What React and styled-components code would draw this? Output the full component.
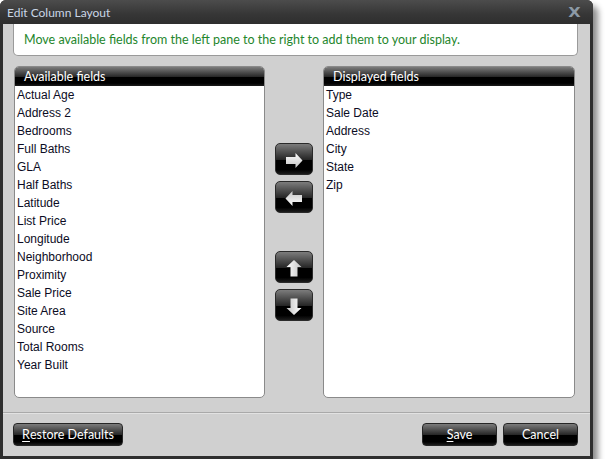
import React from "react";
import styled, { createGlobalStyle } from "styled-components";

const availableFields = [
  "Actual Age",
  "Address 2",
  "Bedrooms",
  "Full Baths",
  "GLA",
  "Half Baths",
  "Latitude",
  "List Price",
  "Longitude",
  "Neighborhood",
  "Proximity",
  "Sale Price",
  "Site Area",
  "Source",
  "Total Rooms",
  "Year Built",
];

const displayedFields = ["Type", "Sale Date", "Address", "City", "State", "Zip"];

const GlobalStyle = createGlobalStyle`
  html, body {
    margin: 0;
    background: #ffffff;
  }
`;

//arrow drawing, rotated for each direction
const Arrow = ({ angle }) => (
  <svg width="38" height="32" viewBox="0 0 38 32">
    <defs>
      <linearGradient id={`ag${angle}`} x1="0" y1="0" x2="0" y2="1">
        <stop offset="0" stopColor="#ffffff" />
        <stop offset="1" stopColor="#c4c4c4" />
      </linearGradient>
    </defs>
    <g transform={`translate(19 17.5) rotate(${angle})`}>
      <polygon
        points="-8,-3.5 1.5,-3.5 1.5,-7.5 8.5,0 1.5,7.5 1.5,3.5 -8,3.5"
        fill={`url(#ag${angle})`}
      />
    </g>
  </svg>
);

const App = () => {
  return (
    <>
      <GlobalStyle />
      <StyledDialog>
        <StyledTitleBar>
          <span>Edit Column Layout</span>
          <StyledClose>X</StyledClose>
        </StyledTitleBar>
        <StyledBody>
          <StyledInfo>
            Move available fields from the left pane to the right to add them
            to your display.
          </StyledInfo>
          <StyledPanes>
            <FieldList title="Available fields" items={availableFields} width={251} />
            <StyledMover>
              <StyledArrowButton>
                <Arrow angle={0} />
              </StyledArrowButton>
              <StyledArrowButton>
                <Arrow angle={180} />
              </StyledArrowButton>
              <StyledArrowButton $gap>
                <Arrow angle={-90} />
              </StyledArrowButton>
              <StyledArrowButton>
                <Arrow angle={90} />
              </StyledArrowButton>
            </StyledMover>
            <FieldList title="Displayed fields" items={displayedFields} width={252} />
          </StyledPanes>
          <StyledFooter>
            <StyledButton $width={110}>
              <u>R</u>estore Defaults
            </StyledButton>
            <StyledRight>
              <StyledButton $width={75}>
                <u>S</u>ave
              </StyledButton>
              <StyledButton $width={75}>Cancel</StyledButton>
            </StyledRight>
          </StyledFooter>
        </StyledBody>
      </StyledDialog>
    </>
  );
};

//List Component
const FieldList = ({ title, items, width }) => {
  return (
    <StyledList $width={width}>
      <StyledListHeader>{title}</StyledListHeader>
      {items.map((item) => (
        <StyledItem key={item}>{item}</StyledItem>
      ))}
    </StyledList>
  );
};

//styling
const gloss = `
  background: linear-gradient(
    to bottom,
    #7c7c7c 0%,
    #4a4a4a 30%,
    #262626 52%,
    #000000 53%,
    #000000 85%,
    #1c1c1c 100%
  );
`;

const StyledDialog = styled.div`
  width: 593px;
  height: 459px;
  box-sizing: border-box;
  padding: 0 3px 3px 3px;
  background: #2e2e2e;
  border-radius: 6px 6px 0 0;
  box-shadow: 5px 6px 6px rgba(0, 0, 0, 0.45);
  display: flex;
  flex-direction: column;
  font-family: Lato, "Open Sans", sans-serif;
`;

const StyledTitleBar = styled.div`
  height: 24px;
  flex: none;
  display: flex;
  align-items: center;
  justify-content: space-between;
  padding: 0 13px 0 7px;
  background: linear-gradient(to bottom, #4c4c4c, #363636 60%, #2e2e2e);
  border-radius: 6px 6px 0 0;
  margin: 0 -3px;
  color: #c9d6e6;
  font-size: 12px;
`;

const StyledClose = styled.span`
  color: #8c9aa6;
  font-family: "DejaVu Sans", sans-serif;
  font-weight: bold;
  font-size: 14px;
  transform: scaleX(1.15);
`;

const StyledBody = styled.div`
  flex: 1;
  background: #d0d0d0;
  display: flex;
  flex-direction: column;
`;

const StyledInfo = styled.div`
  height: 32px;
  box-sizing: border-box;
  margin: 0 12px 0 10px;
  padding: 0 0 0 10px;
  display: flex;
  align-items: center;
  background: #ffffff;
  border: 1px solid #9a9a9a;
  border-top: none;
  border-radius: 0 0 5px 5px;
  color: #24862c;
  font-size: 12.5px;
`;

const StyledPanes = styled.div`
  display: flex;
  height: 332px;
  margin: 10px 0 0 11px;
`;

const StyledList = styled.div`
  width: ${(props) => props.$width}px;
  box-sizing: border-box;
  background: #ffffff;
  border: 1px solid #8a8a8a;
  border-radius: 5px;
  overflow: hidden;
`;

const StyledListHeader = styled.div`
  height: 19px;
  line-height: 19px;
  padding-left: 9px;
  color: #ffffff;
  font-size: 12.5px;
  ${gloss}
`;

const StyledItem = styled.div`
  height: 18px;
  line-height: 18px;
  padding-left: 2px;
  color: #0c0c24;
  font-family: "Liberation Sans", Arial, sans-serif;
  font-size: 12px;
`;

const StyledMover = styled.div`
  width: 58px;
  flex: none;
  display: flex;
  flex-direction: column;
  align-items: center;
  padding-top: 77px;
  gap: 6px;
`;

const StyledArrowButton = styled.div`
  width: 38px;
  height: 32px;
  box-sizing: border-box;
  border: 1px solid #2a2a2a;
  border-radius: 5px;
  display: flex;
  align-items: center;
  justify-content: center;
  margin-top: ${(props) => (props.$gap ? "32px" : "0")};
  ${gloss}
  svg {
    display: block;
    margin: -1px;
  }
`;

const StyledFooter = styled.div`
  margin-top: 14px;
  border-top: 1px solid #a9a9a9;
  box-shadow: inset 0 1px 0 #e2e2e2;
  flex: 1;
  display: flex;
  justify-content: space-between;
  align-items: flex-start;
  padding: 10px 12px 0 10px;
`;

const StyledRight = styled.div`
  display: flex;
  gap: 6px;
`;

const StyledButton = styled.div`
  width: ${(props) => props.$width}px;
  height: 23px;
  box-sizing: border-box;
  border: 1px solid #262626;
  border-radius: 4px;
  display: flex;
  align-items: center;
  justify-content: center;
  color: #ffffff;
  font-size: 12.5px;
  ${gloss}
  u {
    text-decoration-thickness: 1px;
    text-underline-offset: 2px;
  }
`;

export default App;
